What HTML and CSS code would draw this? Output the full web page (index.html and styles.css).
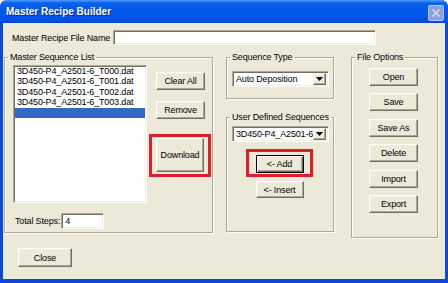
FILE: index.html
```html
<!DOCTYPE html>
<html>
<head>
<meta charset="utf-8">
<title>Master Recipe Builder</title>
<link rel="stylesheet" href="styles.css">
</head>
<body>
<div class="window">
  <div class="titlebar">
    <span class="title">Master Recipe Builder</span>
    <span class="close-box"><svg width="14" height="14" viewBox="0 0 14 14"><path d="M3.5 3.5 L10.5 10.5 M10.5 3.5 L3.5 10.5" stroke="#d4dbf5" stroke-width="1.7" fill="none"/></svg></span>
  </div>
  <div class="client">
    <div class="name-row">
      <span class="name-label">Master Recipe File Name</span>
      <span class="field name-field"></span>
    </div>
    <div class="main">
      <fieldset class="group group-list">
        <legend>Master Sequence List</legend>
        <div class="list-area">
          <div class="listbox">
            <div class="item">3D450-P4_A2501-6_T000.dat</div>
            <div class="item">3D450-P4_A2501-6_T001.dat</div>
            <div class="item">3D450-P4_A2501-6_T002.dat</div>
            <div class="item">3D450-P4_A2501-6_T003.dat</div>
            <div class="item selected"></div>
          </div>
          <div class="list-buttons">
            <button class="btn btn-clear">Clear All</button>
            <button class="btn btn-remove">Remove</button>
            <button class="btn btn-download highlight hl-download">Download</button>
          </div>
        </div>
        <div class="steps-row">
          <span class="steps-label">Total Steps:</span>
          <span class="field steps-field">4</span>
        </div>
      </fieldset>
      <div class="mid-col">
        <fieldset class="group group-type">
          <legend>Sequence Type</legend>
          <div class="combo">
            <span class="combo-text">Auto Deposition</span>
            <span class="combo-btn"><svg width="7" height="4" viewBox="0 0 7 4"><path d="M0 0 H7 L3.5 4 Z" fill="#000"/></svg></span>
          </div>
        </fieldset>
        <fieldset class="group group-user">
          <legend>User Defined Sequences</legend>
          <div class="combo combo-user">
            <span class="combo-text">3D450-P4_A2501-6</span>
            <span class="combo-btn"><svg width="7" height="4" viewBox="0 0 7 4"><path d="M0 0 H7 L3.5 4 Z" fill="#000"/></svg></span>
          </div>
          <div class="user-buttons">
            <button class="btn btn-default highlight hl-add">&lt;- Add</button>
            <button class="btn btn-insert">&lt;- Insert</button>
          </div>
        </fieldset>
      </div>
      <fieldset class="group group-file">
        <legend>File Options</legend>
        <div class="file-buttons">
          <button class="btn btn-file">Open</button>
          <button class="btn btn-file">Save</button>
          <button class="btn btn-file">Save As</button>
          <button class="btn btn-file">Delete</button>
          <button class="btn btn-file">Import</button>
          <button class="btn btn-file">Export</button>
        </div>
      </fieldset>
    </div>
    <div class="footer">
      <button class="btn btn-close">Close</button>
    </div>
  </div>
</div>
</body>
</html>
```
FILE: styles.css
```css
* { box-sizing: border-box; }
html, body { margin: 0; padding: 0; }
body {
  width: 448px;
  height: 283px;
  overflow: hidden;
  background: #ffffff;
  font-family: "Liberation Sans", Arial, sans-serif;
  font-size: 9px;
  letter-spacing: -0.15px;
  color: #000;
}
.window {
  width: 448px;
  height: 283px;
  display: flex;
  flex-direction: column;
  background: #0a4ad8;
  border-radius: 7px 7px 0 0;
  overflow: hidden;
}
.titlebar {
  height: 23px;
  flex: none;
  display: flex;
  align-items: flex-start;
  justify-content: space-between;
  padding: 0 4px 0 6px;
  background: linear-gradient(to bottom, #4f9bff 0px, #0a62ec 3px, #0258e8 9px, #0257ea 16px, #0350dd 21px, #0446cf 23px);
}
.title {
  margin-top: 6px;
  color: #fff;
  font-weight: bold;
  font-size: 10px;
  letter-spacing: 0;
  line-height: 12px;
  text-shadow: 1px 1px 0 #0a2a8a;
}
.close-box {
  margin-top: 5px;
  width: 16px;
  height: 16px;
  display: flex;
  align-items: center;
  justify-content: center;
  background: #8d9fe1;
  border: 1px solid #b7c3ef;
  border-radius: 2px;
}
.client {
  flex: 1;
  margin: 0 3px 4px 3px;
  background: #ece9d8;
  padding: 7px 0 0 1px;
  line-height: 10px;
}
.name-row {
  display: flex;
  align-items: center;
  height: 15px;
}
.name-label {
  width: 109px;
  padding-left: 8px;
  white-space: nowrap;
}
.field {
  display: block;
  background: #fff;
  border: 1px solid;
  border-color: #aca899 #ffffff #ffffff #aca899;
  box-shadow: inset 1px 1px 0 #716f64, inset -1px -1px 0 #f1efe2;
}
.name-field {
  width: 263px;
  height: 15px;
}
.main {
  display: flex;
  align-items: flex-start;
  margin-top: 7px;
}
.group {
  margin: 0;
  padding: 0;
  min-inline-size: 0;
  border: 1px solid #aca899;
  box-shadow: inset 1px 1px 0 #fff, 1px 1px 0 #fff;
}
.group legend {
  margin-left: 3px;
  padding: 0 2px;
  line-height: 10px;
  font-size: 9px;
}
.group-list {
  width: 209px;
  height: 181px;
}
.list-area {
  display: flex;
  padding: 3px 0 0 8px;
}
.listbox {
  width: 134px;
  height: 138px;
  background: #fff;
  border: 1px solid;
  border-color: #aca899 #ffffff #ffffff #aca899;
  box-shadow: inset 1px 1px 0 #716f64, inset -1px -1px 0 #f1efe2;
  padding: 0 1px 0 1px;
}
.item {
  height: 10.4px;
  line-height: 10.4px;
  padding-left: 2px;
  white-space: nowrap;
}
.item.selected {
  background: #316ac5;
}
.list-buttons {
  display: flex;
  flex-direction: column;
  margin-left: 9px;
  padding-top: 7px;
}
.btn {
  display: flex;
  align-items: center;
  justify-content: center;
  margin: 0;
  padding: 0;
  font-family: inherit;
  font-size: 9px;
  letter-spacing: -0.15px;
  color: #000;
  background: #ece9d8;
  border: 1px solid;
  border-color: #ffffff #716f64 #716f64 #ffffff;
  box-shadow: inset -1px -1px 0 #aca899, inset 1px 1px 0 #f1efe2;
  border-radius: 0;
  height: 18px;
}
.btn-clear { width: 49px; }
.btn-remove { width: 49px; margin-top: 11px; }
.btn-download { width: 48px; height: 34px; margin-top: 19px; }
.highlight { position: relative; }
.highlight::after {
  content: "";
  position: absolute;
  border: 3px solid #e01e26;
}
.hl-download::after { inset: -5px -8px -6px -8px; }
.hl-add::after { inset: -7px -10px -5px -11px; }
.steps-row {
  display: flex;
  align-items: center;
  margin-top: 10px;
  padding-left: 10px;
}
.steps-label { white-space: nowrap; margin-right: 1px; }
.steps-field {
  width: 43px;
  height: 16px;
  padding-left: 3px;
  line-height: 14px;
}
.mid-col {
  width: 108px;
  margin-left: 13px;
  display: flex;
  flex-direction: column;
}
.group-type {
  height: 47px;
}
.combo {
  display: flex;
  width: 97px;
  height: 16px;
  margin: 9px 0 0 5px;
  background: #fff;
  border: 1px solid;
  border-color: #aca899 #ffffff #ffffff #aca899;
  box-shadow: inset 1px 1px 0 #716f64, inset -1px -1px 0 #f1efe2;
  padding: 1px 2px 1px 2px;
}
.combo-text {
  flex: 1;
  padding-left: 1px;
  line-height: 12px;
  white-space: nowrap;
  overflow: hidden;
}
.combo-btn {
  width: 13px;
  height: 12px;
  display: flex;
  align-items: center;
  justify-content: center;
  background: #ece9d8;
  border: 1px solid;
  border-color: #f1efe2 #716f64 #716f64 #f1efe2;
  box-shadow: inset -1px -1px 0 #aca899, inset 1px 1px 0 #fff;
}
.group-user {
  height: 120px;
  margin-top: 13px;
}
.combo-user {
  margin-top: 4px;
}
.user-buttons {
  display: flex;
  flex-direction: column;
  align-items: center;
  padding-right: 1px;
  margin-top: 13px;
}
.btn-default {
  width: 48px;
  border: 1px solid #000;
  box-shadow: inset 1px 1px 0 #fff, inset -1px -1px 0 #716f64, inset -2px -2px 0 #aca899;
}
.btn-insert {
  width: 48px;
  height: 17px;
  margin-top: 8px;
}
.group-file {
  width: 87px;
  height: 186px;
  margin-left: 17px;
}
.file-buttons {
  display: flex;
  flex-direction: column;
  align-items: center;
  gap: 7.4px;
  padding: 6px 2px 0 0;
}
.btn-file { width: 49px; }
.footer {
  margin-top: 10px;
  padding-left: 14px;
}
.btn-close {
  width: 54px;
  height: 19px;
}
```
